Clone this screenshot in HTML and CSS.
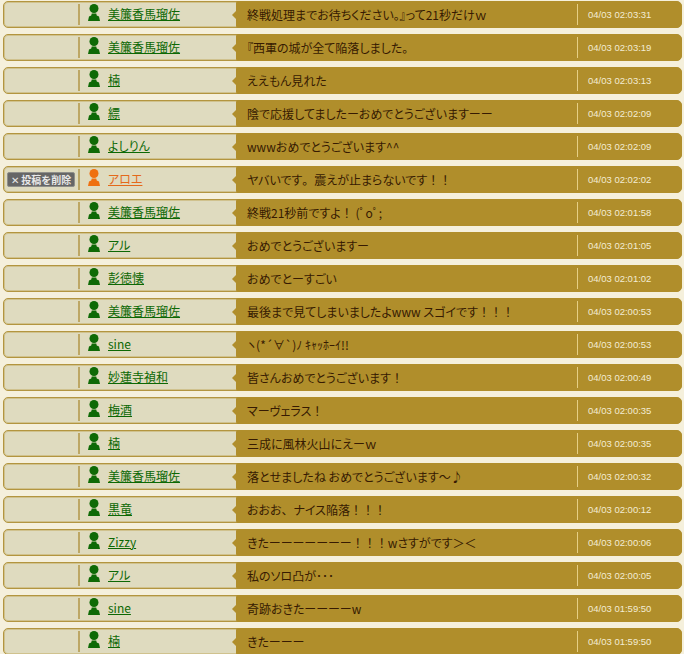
FILE: index.html
```html
<!DOCTYPE html>
<html lang="ja">
<head>
<meta charset="utf-8">
<title>Comments</title>
<link rel="stylesheet" href="styles.css">
</head>
<body>
<svg class="defs" width="0" height="0"><defs><symbol id="person" viewBox="0 0 12 17"><circle cx="6" cy="4.500" r="4.500"/><path d="M3.800 9.500h4.400L8.800 11.500 11 12.500 12 17H0L1 12.500 3.200 11.500z"/></symbol></defs></svg>
<ul class="list">
<li class="row"><div class="side"></div><div class="user"><svg class="pin"><use href="#person"/></svg><a href="#">美簾香馬瑠佐</a></div><div class="body"><p class="msg">終戦処理までお待ちください。』って21秒だけｗ</p><time>04/03 02:03:31</time></div></li>
<li class="row"><div class="side"></div><div class="user"><svg class="pin"><use href="#person"/></svg><a href="#">美簾香馬瑠佐</a></div><div class="body"><p class="msg">『西軍の城が全て陥落しました。</p><time>04/03 02:03:19</time></div></li>
<li class="row"><div class="side"></div><div class="user"><svg class="pin"><use href="#person"/></svg><a href="#">楠</a></div><div class="body"><p class="msg">ええもん見れた</p><time>04/03 02:03:13</time></div></li>
<li class="row"><div class="side"></div><div class="user"><svg class="pin"><use href="#person"/></svg><a href="#">縹</a></div><div class="body"><p class="msg">陰で応援してましたーおめでとうございますーー</p><time>04/03 02:02:09</time></div></li>
<li class="row"><div class="side"></div><div class="user"><svg class="pin"><use href="#person"/></svg><a href="#">よしりん</a></div><div class="body"><p class="msg">wwwおめでとうございます^^</p><time>04/03 02:02:09</time></div></li>
<li class="row own"><div class="side"><button class="del" type="button"><span class="x">✕</span> 投稿を削除</button></div><div class="user"><svg class="pin"><use href="#person"/></svg><a href="#">アロエ</a></div><div class="body"><p class="msg">ヤバいです<span class="fw">。</span>震えが止まらないです<span class="fw">！！</span></p><time>04/03 02:02:02</time></div></li>
<li class="row"><div class="side"></div><div class="user"><svg class="pin"><use href="#person"/></svg><a href="#">美簾香馬瑠佐</a></div><div class="body"><p class="msg">終戦21秒前ですよ<span class="fw">！</span> (ﾟoﾟ;</p><time>04/03 02:01:58</time></div></li>
<li class="row"><div class="side"></div><div class="user"><svg class="pin"><use href="#person"/></svg><a href="#">アル</a></div><div class="body"><p class="msg">おめでとうございますー</p><time>04/03 02:01:05</time></div></li>
<li class="row"><div class="side"></div><div class="user"><svg class="pin"><use href="#person"/></svg><a href="#">彭徳懐</a></div><div class="body"><p class="msg">おめでとーすごい</p><time>04/03 02:01:02</time></div></li>
<li class="row"><div class="side"></div><div class="user"><svg class="pin"><use href="#person"/></svg><a href="#">美簾香馬瑠佐</a></div><div class="body"><p class="msg">最後まで見てしまいましたよwww スゴイです<span class="fw">！！！</span></p><time>04/03 02:00:53</time></div></li>
<li class="row"><div class="side"></div><div class="user"><svg class="pin"><use href="#person"/></svg><a href="#">sine</a></div><div class="body"><p class="msg">ヽ(*´∀`)ﾉ ｷｬｯﾎｰｲ!!</p><time>04/03 02:00:53</time></div></li>
<li class="row"><div class="side"></div><div class="user"><svg class="pin"><use href="#person"/></svg><a href="#">妙蓮寺禎和</a></div><div class="body"><p class="msg">皆さんおめでとうございます<span class="fw">！</span></p><time>04/03 02:00:49</time></div></li>
<li class="row"><div class="side"></div><div class="user"><svg class="pin"><use href="#person"/></svg><a href="#">梅酒</a></div><div class="body"><p class="msg">マーヴェラス<span class="fw">！</span></p><time>04/03 02:00:35</time></div></li>
<li class="row"><div class="side"></div><div class="user"><svg class="pin"><use href="#person"/></svg><a href="#">楠</a></div><div class="body"><p class="msg">三成に風林火山にえーｗ</p><time>04/03 02:00:35</time></div></li>
<li class="row"><div class="side"></div><div class="user"><svg class="pin"><use href="#person"/></svg><a href="#">美簾香馬瑠佐</a></div><div class="body"><p class="msg">落とせましたね おめでとうございます～♪</p><time>04/03 02:00:32</time></div></li>
<li class="row"><div class="side"></div><div class="user"><svg class="pin"><use href="#person"/></svg><a href="#">黒竜</a></div><div class="body"><p class="msg">おおお<span class="fw">、</span>ナイス陥落<span class="fw">！！！</span></p><time>04/03 02:00:12</time></div></li>
<li class="row"><div class="side"></div><div class="user"><svg class="pin"><use href="#person"/></svg><a href="#">Zizzy</a></div><div class="body"><p class="msg">きたーーーーーーー<span class="fw">！！！</span>wさすがです＞＜</p><time>04/03 02:00:06</time></div></li>
<li class="row"><div class="side"></div><div class="user"><svg class="pin"><use href="#person"/></svg><a href="#">アル</a></div><div class="body"><p class="msg">私のソロ凸が･･･</p><time>04/03 02:00:05</time></div></li>
<li class="row"><div class="side"></div><div class="user"><svg class="pin"><use href="#person"/></svg><a href="#">sine</a></div><div class="body"><p class="msg">奇跡おきたーーーーw</p><time>04/03 01:59:50</time></div></li>
<li class="row"><div class="side"></div><div class="user"><svg class="pin"><use href="#person"/></svg><a href="#">楠</a></div><div class="body"><p class="msg">きたーーー</p><time>04/03 01:59:50</time></div></li>
</ul>
</body>
</html>
```
FILE: styles.css
```css
html, body { margin: 0; padding: 0; height: 654px; overflow: hidden; }
body { background: #f5f0dc; font-family: "Noto Sans CJK JP", "Liberation Sans", sans-serif; font-size: 12px; font-feature-settings: "palt"; }
.defs { position: absolute; }
.list { list-style: none; margin: 0; padding: 1px 2px 0 3px; display: flex; flex-direction: column; gap: 6px; }
.row { height: 27px; flex: none; display: flex; box-sizing: border-box; background: #dfdbbf; border: 1px solid #b3953f; border-radius: 5px; box-shadow: inset 0 0 0 1px #d0c28e; position: relative; }
.side { flex: none; border-right: 2px solid #bda765; margin: 2px 0; display: flex; align-items: center; justify-content: center; box-sizing: border-box; width: 76px; }
.user { width: 156px; flex: none; display: flex; gap: 8px; padding-left: 8px; box-sizing: border-box; align-items: flex-start; }
.pin { width: 12px; height: 17px; margin-top: 2px; fill: #0e6a06; flex: none; }
.user a { color: #0c6804; font-size: 12px; line-height: 16px; margin-top: 4px; }
.body { flex: 1; display: flex; align-items: center; background: #b08e2b; margin: -1px -1px -1px 0; border-radius: 2px 6px 6px 2px; position: relative; padding-left: 11px; color: #361a02; }
.body::before { content: ""; position: absolute; left: -4px; top: 10px; border: 4px solid transparent; border-left: 0; border-right-color: #b08e2b; }
.msg { flex: 1; margin: 0; font-size: 12px; line-height: 16px; }
.fw { font-feature-settings: normal; }
time { width: 105px; height: 21px; border-left: 1px solid #e6cf85; padding-left: 10px; color: #f3ecd4; font-family: "Liberation Sans", sans-serif; font-size: 9.500px; line-height: 21px; flex: none; box-sizing: border-box; }
.own .pin { fill: #ef7010; }
.own .user a { color: #e4691a; }
.del { width: 68px; height: 15px; padding: 0; border: 1px solid #8f8f8a; border-radius: 2px; background: #666; color: #e8e8e8; font-family: "Noto Sans CJK JP", sans-serif; font-size: 10px; font-weight: 700; line-height: 13px; white-space: nowrap; }
.x { font-weight: 400; }
```
